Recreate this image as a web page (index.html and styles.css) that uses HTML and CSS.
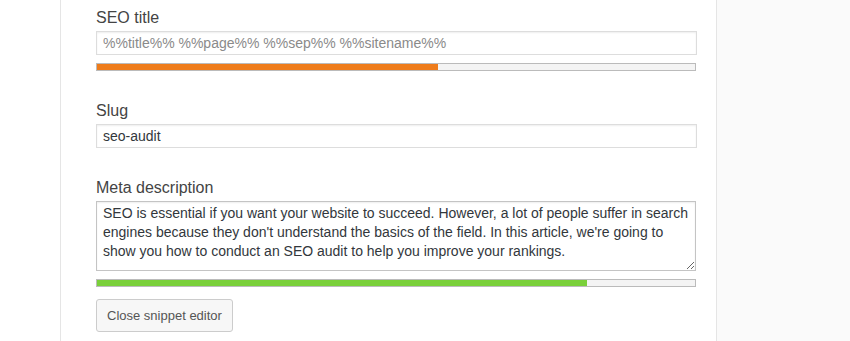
FILE: index.html
```html
<!DOCTYPE html>
<html lang="en">
<head>
    <meta charset="UTF-8">
    <meta name="viewport" content="width=device-width, initial-scale=1.0">
    <title>Snippet editor</title>
    <link rel="stylesheet" href="styles.css">
</head>
<body>
    <div class="page">
        <div class="gutter"></div>

        <div class="panel">
            <div class="field">
                <label for="seo-title">SEO title</label>
                <input type="text" id="seo-title" placeholder="%%title%% %%page%% %%sep%% %%sitename%%">
                <div class="meter"><div class="meter-fill orange" style="width: 57%"></div></div>
            </div>

            <div class="field">
                <label for="slug">Slug</label>
                <input type="text" id="slug" value="seo-audit">
            </div>

            <div class="field">
                <label for="meta-desc">Meta description</label>
                <textarea id="meta-desc" rows="3">SEO is essential if you want your website to succeed. However, a lot of people suffer in search engines because they don't understand the basics of the field. In this article, we're going to show you how to conduct an SEO audit to help you improve your rankings.</textarea>
                <div class="meter"><div class="meter-fill green" style="width: 82%"></div></div>
                <button type="button">Close snippet editor</button>
            </div>
        </div>

        <div class="sidebar"></div>
    </div>
</body>
</html>
```

FILE: styles.css
```css
body {
    margin: 0;
    font-family: "Liberation Sans", Arial, sans-serif;
    background-color: #fff;
    overflow: hidden;
}
.page {
    display: flex;
    height: 341px;
}
.gutter {
    width: 60px;
    flex: none;
}
.panel {
    box-sizing: border-box;
    width: 657px;
    flex: none;
    padding: 8px 0 0 35px;
    border-left: 1px solid #e5e5e5;
    border-right: 1px solid #e5e5e5;
    background: #fff;
}
.sidebar {
    flex: 1;
    background-color: #fafafa;
}
.field {
    margin-bottom: 30px;
}
label {
    display: block;
    font-size: 16px;
    line-height: 20px;
    color: #444;
    margin-bottom: 3px;
}
input[type="text"] {
    display: block;
    box-sizing: border-box;
    width: 601px;
    height: 24px;
    margin: 0;
    padding: 0 6px;
    font-family: inherit;
    font-size: 14px;
    color: #32373c;
    border: 1px solid #ddd;
    box-shadow: inset 0 1px 2px rgba(0, 0, 0, 0.07);
    outline: none;
}
input::placeholder {
    color: #8a8a8a;
}
textarea {
    display: block;
    box-sizing: border-box;
    width: 600px;
    height: 70px;
    margin: 0;
    padding: 2px 6px;
    font-family: inherit;
    font-size: 14px;
    line-height: 19px;
    color: #32373c;
    border: 1px solid #c4c4c4;
    box-shadow: inset 0 1px 2px rgba(0, 0, 0, 0.07);
    outline: none;
}
.meter {
    box-sizing: border-box;
    width: 600px;
    height: 8px;
    margin-top: 8px;
    border: 1px solid #bbb;
    background-color: #f4f4f4;
}
.meter-fill {
    height: 100%;
}
.orange { background-color: #ee7c1b; }
.green { background-color: #7ad03a; }

button {
    display: block;
    box-sizing: border-box;
    height: 33px;
    margin-top: 12px;
    padding: 0 10px;
    font-family: inherit;
    font-size: 13px;
    color: #555;
    background-color: #f7f7f7;
    border: 1px solid #ccc;
    border-radius: 3px;
    cursor: pointer;
}
button:hover {
    background-color: #fafafa;
}
```
